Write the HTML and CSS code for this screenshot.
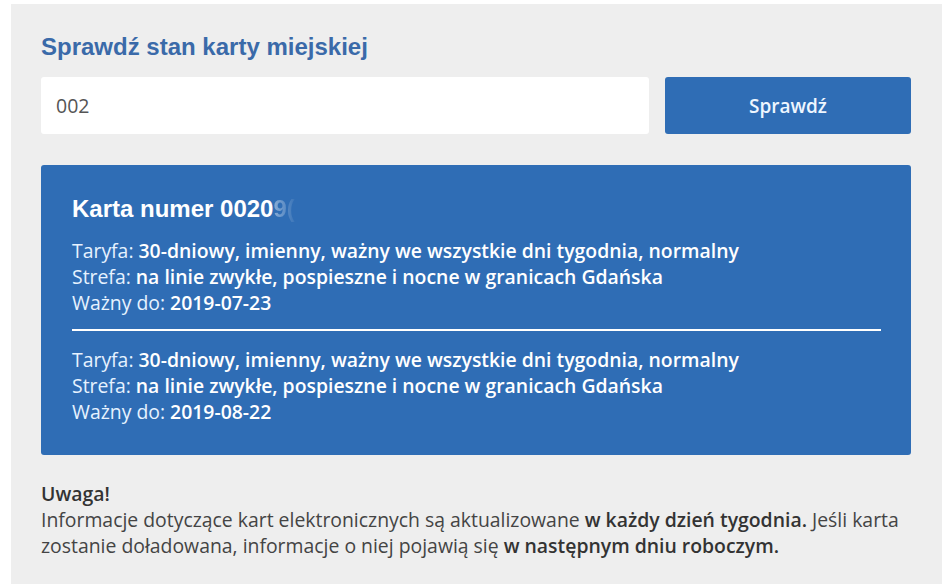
FILE: index.html
```html
<!DOCTYPE html>
<html lang="pl">
<head>
    <meta charset="UTF-8">
    <meta name="viewport" content="width=device-width, initial-scale=1.0">
    <title>Sprawdź stan karty miejskiej</title>
    <link rel="stylesheet" href="styles.css">
</head>
<body>
    <section class="card-check">
        <h2 class="card-check__title">Sprawdź stan karty miejskiej</h2>

        <form class="search-form" onsubmit="return false">
            <input class="search-input" type="text" value="002" aria-label="Numer karty">
            <button class="search-button" type="submit">Sprawdź</button>
        </form>

        <!-- Wynik wyszukiwania -->
        <div class="result">
            <h3 class="result__title">Karta numer 0020<span class="result__hidden">9(</span></h3>

            <div class="ticket">
                <div>Taryfa: <b>30-dniowy, imienny, ważny we wszystkie dni tygodnia, normalny</b></div>
                <div>Strefa: <b>na linie zwykłe, pospieszne i nocne w granicach Gdańska</b></div>
                <div>Ważny do: <b>2019-07-23</b></div>
            </div>

            <hr class="ticket-sep">

            <div class="ticket">
                <div>Taryfa: <b>30-dniowy, imienny, ważny we wszystkie dni tygodnia, normalny</b></div>
                <div>Strefa: <b>na linie zwykłe, pospieszne i nocne w granicach Gdańska</b></div>
                <div>Ważny do: <b>2019-08-22</b></div>
            </div>
        </div>

        <div class="notice">
            <strong>Uwaga!</strong><br>
            Informacje dotyczące kart elektronicznych są aktualizowane <b>w każdy dzień tygodnia.</b>
            Jeśli karta zostanie doładowana, informacje o niej pojawią się <b>w następnym dniu roboczym.</b>
        </div>
    </section>
</body>
</html>
```

FILE: styles.css
```css
* {
    margin: 0;
    padding: 0;
    box-sizing: border-box;
}

:root {
    --panel-bg: #eeeeee;
    --blue: #2f6db5;
    --heading: #3a6aa9;
    --text: #444444;
}

body {
    background: #ffffff;
    font-family: 'Open Sans', sans-serif;
    color: var(--text);
}

.card-check {
    margin: 4px 0 4px 11px;
    padding: 29px 31px 20px 30px;
    background: var(--panel-bg);
    min-height: 580px;
}

.card-check__title {
    font-family: 'Liberation Sans', Arial, sans-serif;
    font-size: 24px;
    line-height: 28px;
    font-weight: bold;
    color: var(--heading);
}

.search-form {
    display: flex;
    gap: 16px;
    margin-top: 16px;
}

.search-input {
    flex: 1;
    height: 57px;
    padding: 0 15px;
    border: none;
    border-radius: 3px;
    background: #ffffff;
    font-family: 'Open Sans', sans-serif;
    font-size: 19.5px;
    color: #555555;
    outline: none;
}

.search-button {
    width: 246px;
    height: 57px;
    border: none;
    border-radius: 3px;
    background: var(--blue);
    color: #eef6ff;
    font-family: 'Open Sans', sans-serif;
    font-size: 19px;
    font-weight: 600;
    cursor: pointer;
}

.result {
    margin-top: 31px;
    padding: 29px 30px 30px 31px;
    background: var(--blue);
    border-radius: 3px;
    color: #e6f2ff;
    font-size: 19.4px;
    line-height: 26px;
}

.result__title {
    font-family: 'Liberation Sans', Arial, sans-serif;
    font-size: 24px;
    line-height: 30px;
    font-weight: bold;
    color: #ffffff;
    margin-bottom: 14px;
}

/* zamazana końcówka numeru */
.result__hidden {
    background: linear-gradient(90deg, rgba(255, 255, 255, 0.45), rgba(255, 255, 255, 0.05));
    -webkit-background-clip: text;
    background-clip: text;
    color: transparent;
}

.ticket b {
    font-weight: 600;
    color: #ffffff;
}

.ticket-sep {
    border: none;
    height: 2px;
    background: #ffffff;
    margin: 13px 0 16px;
}

.notice {
    margin-top: 26px;
    font-size: 19.4px;
    line-height: 26px;
    color: #444444;
}

.notice strong,
.notice b {
    font-weight: 600;
    color: #333333;
}
```
